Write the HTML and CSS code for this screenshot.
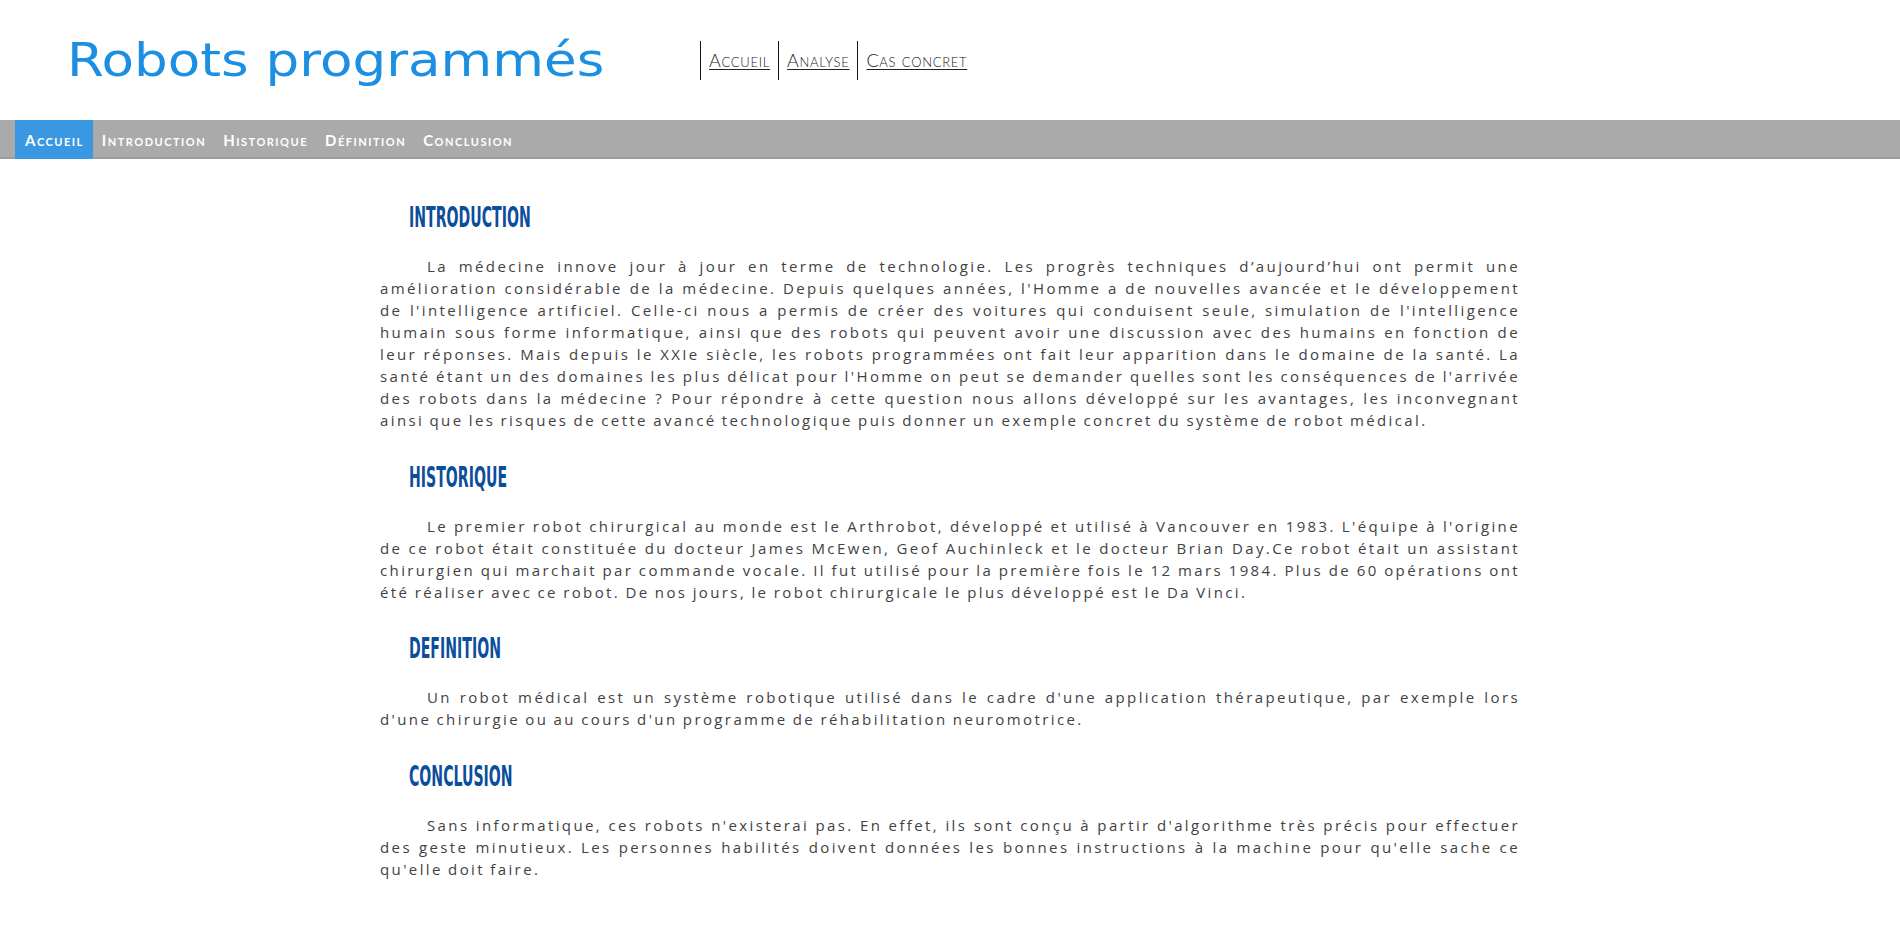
FILE: index.html
```html
<!DOCTYPE html>
<html lang="fr">
<head>
<meta charset="utf-8">
<title>Robots programmés</title>
<link rel="stylesheet" href="styles.css">
</head>
<body>
<header class="site-header">
  <h1 class="site-title"><span>Robots programmés</span></h1>
  <nav class="top-links">
    <a href="#" class="top-link">Accueil</a>
    <a href="#" class="top-link">Analyse</a>
    <a href="#" class="top-link">Cas concret</a>
  </nav>
</header>
<nav class="menu-bar">
  <ul class="menu">
    <li class="menu-item active"><a href="#">Accueil</a></li>
    <li class="menu-item"><a href="#">Introduction</a></li>
    <li class="menu-item"><a href="#">Historique</a></li>
    <li class="menu-item"><a href="#">Définition</a></li>
    <li class="menu-item"><a href="#">Conclusion</a></li>
  </ul>
</nav>
<main class="content">
  <section class="block">
    <h2 class="block-title"><span>Introduction</span></h2>
    <p class="block-text">La médecine innove jour à jour en terme de technologie. Les progrès techniques d’aujourd’hui ont permit une amélioration considérable de la médecine. Depuis quelques années, l'Homme a de nouvelles avancée et le développement de l'intelligence artificiel. Celle-ci nous a permis de créer des voitures qui conduisent seule, simulation de l'intelligence humain sous forme informatique, ainsi que des robots qui peuvent avoir une discussion avec des humains en fonction de leur réponses. Mais depuis le XXIe siècle, les robots programmées ont fait leur apparition dans le domaine de la santé. La santé étant un des domaines les plus délicat pour l'Homme on peut se demander quelles sont les conséquences de l'arrivée des robots dans la médecine ? Pour répondre à cette question nous allons développé sur les avantages, les inconvegnant ainsi que les risques de cette avancé technologique puis donner un exemple concret du système de robot médical.</p>
  </section>
  <section class="block">
    <h2 class="block-title"><span>Historique</span></h2>
    <p class="block-text">Le premier robot chirurgical au monde est le Arthrobot, développé et utilisé à Vancouver en 1983. L'équipe à l'origine de ce robot était constituée du docteur James McEwen, Geof Auchinleck et le docteur Brian Day.Ce robot était un assistant chirurgien qui marchait par commande vocale. Il fut utilisé pour la première fois le 12 mars 1984. Plus de 60 opérations ont été réaliser avec ce robot. De nos jours, le robot chirurgicale le plus développé est le Da Vinci.</p>
  </section>
  <section class="block">
    <h2 class="block-title"><span>Definition</span></h2>
    <p class="block-text">Un robot médical est un système robotique utilisé dans le cadre d'une application thérapeutique, par exemple lors d'une chirurgie ou au cours d'un programme de réhabilitation neuromotrice.</p>
  </section>
  <section class="block">
    <h2 class="block-title"><span>Conclusion</span></h2>
    <p class="block-text">Sans informatique, ces robots n'existerai pas. En effet, ils sont conçu à partir d'algorithme très précis pour effectuer des geste minutieux. Les personnes habilités doivent données les bonnes instructions à la machine pour qu'elle sache ce qu'elle doit faire.</p>
  </section>
</main>
</body>
</html>
```

FILE: styles.css
```css
html, body {
  margin: 0;
  padding: 0;
  background: #ffffff;
}

body {
  font-family: "Open Sans", "Liberation Sans", sans-serif;
  color: #424242;
}

.site-header {
  display: flex;
  align-items: center;
  height: 120px;
  padding-left: 67px;
  box-sizing: border-box;
}

.site-title {
  flex: 0 0 633px;
  margin: 0;
  font-family: "DejaVu Sans", sans-serif;
  font-weight: 400;
  font-size: 47px;
  line-height: 56px;
  color: #1d8fe3;
  white-space: nowrap;
}

.site-title span {
  display: inline-block;
  transform: scaleX(1.13);
  transform-origin: left center;
}

.top-links {
  display: flex;
  align-items: stretch;
  height: 39px;
}

.top-link {
  display: flex;
  align-items: center;
  border-left: 1px solid #111;
  padding: 0 8px;
  font-family: "Lato", sans-serif;
  font-weight: 300;
  font-variant: small-caps;
  font-size: 18px;
  letter-spacing: 0.7px;
  color: #222;
  text-decoration: underline;
  text-underline-offset: 2px;
  text-decoration-thickness: 1px;
}

.menu-bar {
  background: #aaaaab;
  border-bottom: 2px solid #9d9d9d;
  height: 37px;
}

.menu {
  display: flex;
  list-style: none;
  margin: 0;
  padding: 0 0 0 15px;
  height: 39px;
}

.menu-item a {
  display: flex;
  align-items: center;
  height: 39px;
  padding: 0 8px 0 9px;
  font-family: "Lato", sans-serif;
  font-weight: 700;
  font-variant: small-caps;
  font-size: 15px;
  letter-spacing: 1.5px;
  color: #ffffff;
  text-decoration: none;
}

.menu-item.active a {
  background: #3a98e2;
  padding: 0 9px 0 10px;
}

.content {
  width: 60%;
  margin: 0 auto;
  padding: 42px 0 40px;
}

.block + .block {
  margin-top: 29.5px;
}

.block-title {
  margin: 0 0 20px 29px;
  font-family: "Liberation Sans Narrow", "DejaVu Sans Condensed", "Liberation Sans", sans-serif;
  font-weight: 700;
  font-size: 28px;
  line-height: 34px;
  text-transform: uppercase;
  color: #0b4e9b;
}

.block-title span {
  display: inline-block;
  transform: scaleX(0.56);
  transform-origin: left center;
}

.block-text {
  margin: 0;
  font-size: 15px;
  line-height: 22px;
  font-weight: 400;
  letter-spacing: 2.39px;
  word-spacing: -1px;
  text-align: justify;
  text-indent: 47px;
}
```
